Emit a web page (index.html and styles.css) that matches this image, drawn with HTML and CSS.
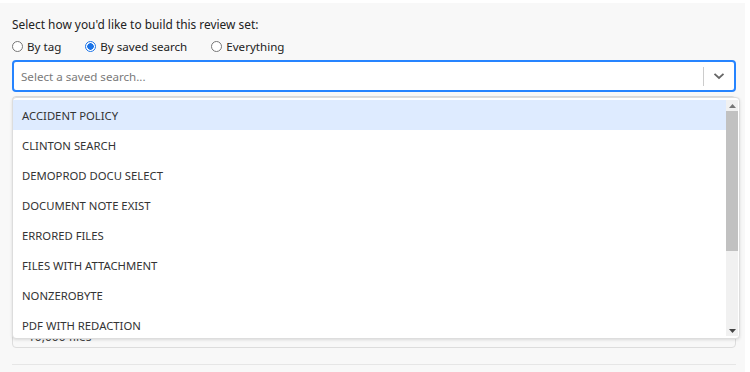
FILE: index.html
```html
<!DOCTYPE html>
<html lang="en">
<head>
<meta charset="utf-8">
<title>Review set</title>
<link rel="stylesheet" href="styles.css">
</head>
<body>
<div class="panel">
  <p class="prompt">Select how you'd like to build this review set:</p>
  <div class="radios">
    <label class="radio"><span class="dot"></span>By tag</label>
    <label class="radio checked"><span class="dot"></span>By saved search</label>
    <label class="radio"><span class="dot"></span>Everything</label>
  </div>
  <div class="picker">
    <div class="control">
      <span class="placeholder">Select a saved search...</span>
      <span class="sep"></span>
      <span class="chev"><svg width="12" height="8" viewBox="0 0 12 8"><path d="M1.5 1.8 L6 6 L10.5 1.8" fill="none" stroke="#666" stroke-width="1.8"/></svg></span>
    </div>
    <div class="menu">
      <div class="list">
        <div class="option active">ACCIDENT POLICY</div>
        <div class="option">CLINTON SEARCH</div>
        <div class="option">DEMOPROD DOCU SELECT</div>
        <div class="option">DOCUMENT NOTE EXIST</div>
        <div class="option">ERRORED FILES</div>
        <div class="option">FILES WITH ATTACHMENT</div>
        <div class="option">NONZEROBYTE</div>
        <div class="option">PDF WITH REDACTION</div>
        <div class="option">REVIEWED FILES</div>
      </div>
      <div class="scrollbar">
        <span class="sb-btn"><svg width="7" height="4" viewBox="0 0 7 4"><path d="M0 4 L3.5 0 L7 4Z" fill="#777"/></svg></span>
        <span class="sb-thumb"></span>
        <span class="sb-track"></span>
        <span class="sb-btn"><svg width="7" height="4" viewBox="0 0 7 4"><path d="M0 0 L3.5 4 L7 0Z" fill="#444"/></svg></span>
      </div>
    </div>
  </div>
  <div class="results"><span class="count">10,000 files</span></div>
  <div class="rule"></div>
</div>
</body>
</html>
```

FILE: styles.css
```css
html, body {
  margin: 0;
  padding: 0;
  background: #ffffff;
}
body {
  font-family: "Noto Sans", "Open Sans", sans-serif;
  color: #222;
}
.panel {
  margin-top: 3px;
  width: 745px;
  height: 369px;
  background: #f8f8f8;
  padding: 0 9px 0 12px;
  box-sizing: border-box;
}
.prompt {
  margin: 0;
  padding-top: 13px;
  font-size: 11.9px;
  line-height: 16px;
  color: #222;
}
.radios {
  display: flex;
  gap: 24px;
  margin-top: 6px;
  height: 16px;
  align-items: center;
}
.radio {
  display: flex;
  align-items: center;
  gap: 4px;
  font-size: 11.6px;
  color: #222;
}
.dot {
  width: 9px;
  height: 9px;
  border: 1px solid #767676;
  border-radius: 50%;
  background: #fff;
  box-sizing: content-box;
}
.radio.checked .dot {
  border-color: #1a73e8;
  background: radial-gradient(circle, #1a73e8 0 3px, #fff 3.5px);
}
.picker {
  position: relative;
  margin-top: 6px;
}
.control {
  height: 32px;
  box-sizing: border-box;
  border: 2px solid #2684ff;
  border-radius: 4px;
  background: #fff;
  display: flex;
  align-items: center;
  padding-left: 7px;
}
.placeholder {
  flex: 1;
  font-size: 11.6px;
  color: #7a7a7a;
}
.sep {
  width: 1px;
  height: 19px;
  background: #ccc;
}
.chev {
  width: 30px;
  display: flex;
  justify-content: center;
  align-items: center;
}
.menu {
  position: absolute;
  top: 37px;
  left: 0;
  width: 728px;
  height: 242px;
  box-sizing: border-box;
  border: 1px solid #ddd;
  border-radius: 4px;
  background: #fff;
  box-shadow: 0 1px 3px rgba(0,0,0,0.12);
  padding: 2px 0;
  display: flex;
  overflow: hidden;
  z-index: 2;
}
.list {
  flex: 1;
  overflow: hidden;
}
.option {
  height: 29px;
  padding-top: 1px;
  line-height: 30px;
  padding-left: 9px;
  font-size: 11.3px;
  color: #333;
}
.option.active {
  background: #deebff;
}
.scrollbar {
  width: 12px;
  margin-right: 1px;
  display: flex;
  flex-direction: column;
  background: #f1f1f1;
}
.sb-btn {
  height: 11px;
  display: flex;
  align-items: center;
  justify-content: center;
}
.sb-thumb {
  height: 140px;
  background: #c1c1c1;
}
.sb-track {
  flex: 1;
}
.results {
  margin-top: 4px;
  height: 252px;
  box-sizing: border-box;
  border: 1px solid #ddd;
  border-radius: 4px;
  display: flex;
  align-items: flex-end;
  padding: 0 0 3px 15px;
}
.count {
  font-size: 12px;
  line-height: 14px;
  color: #444;
}
.rule {
  margin-top: 16px;
  height: 1px;
  background: #e6e6e6;
}
```
